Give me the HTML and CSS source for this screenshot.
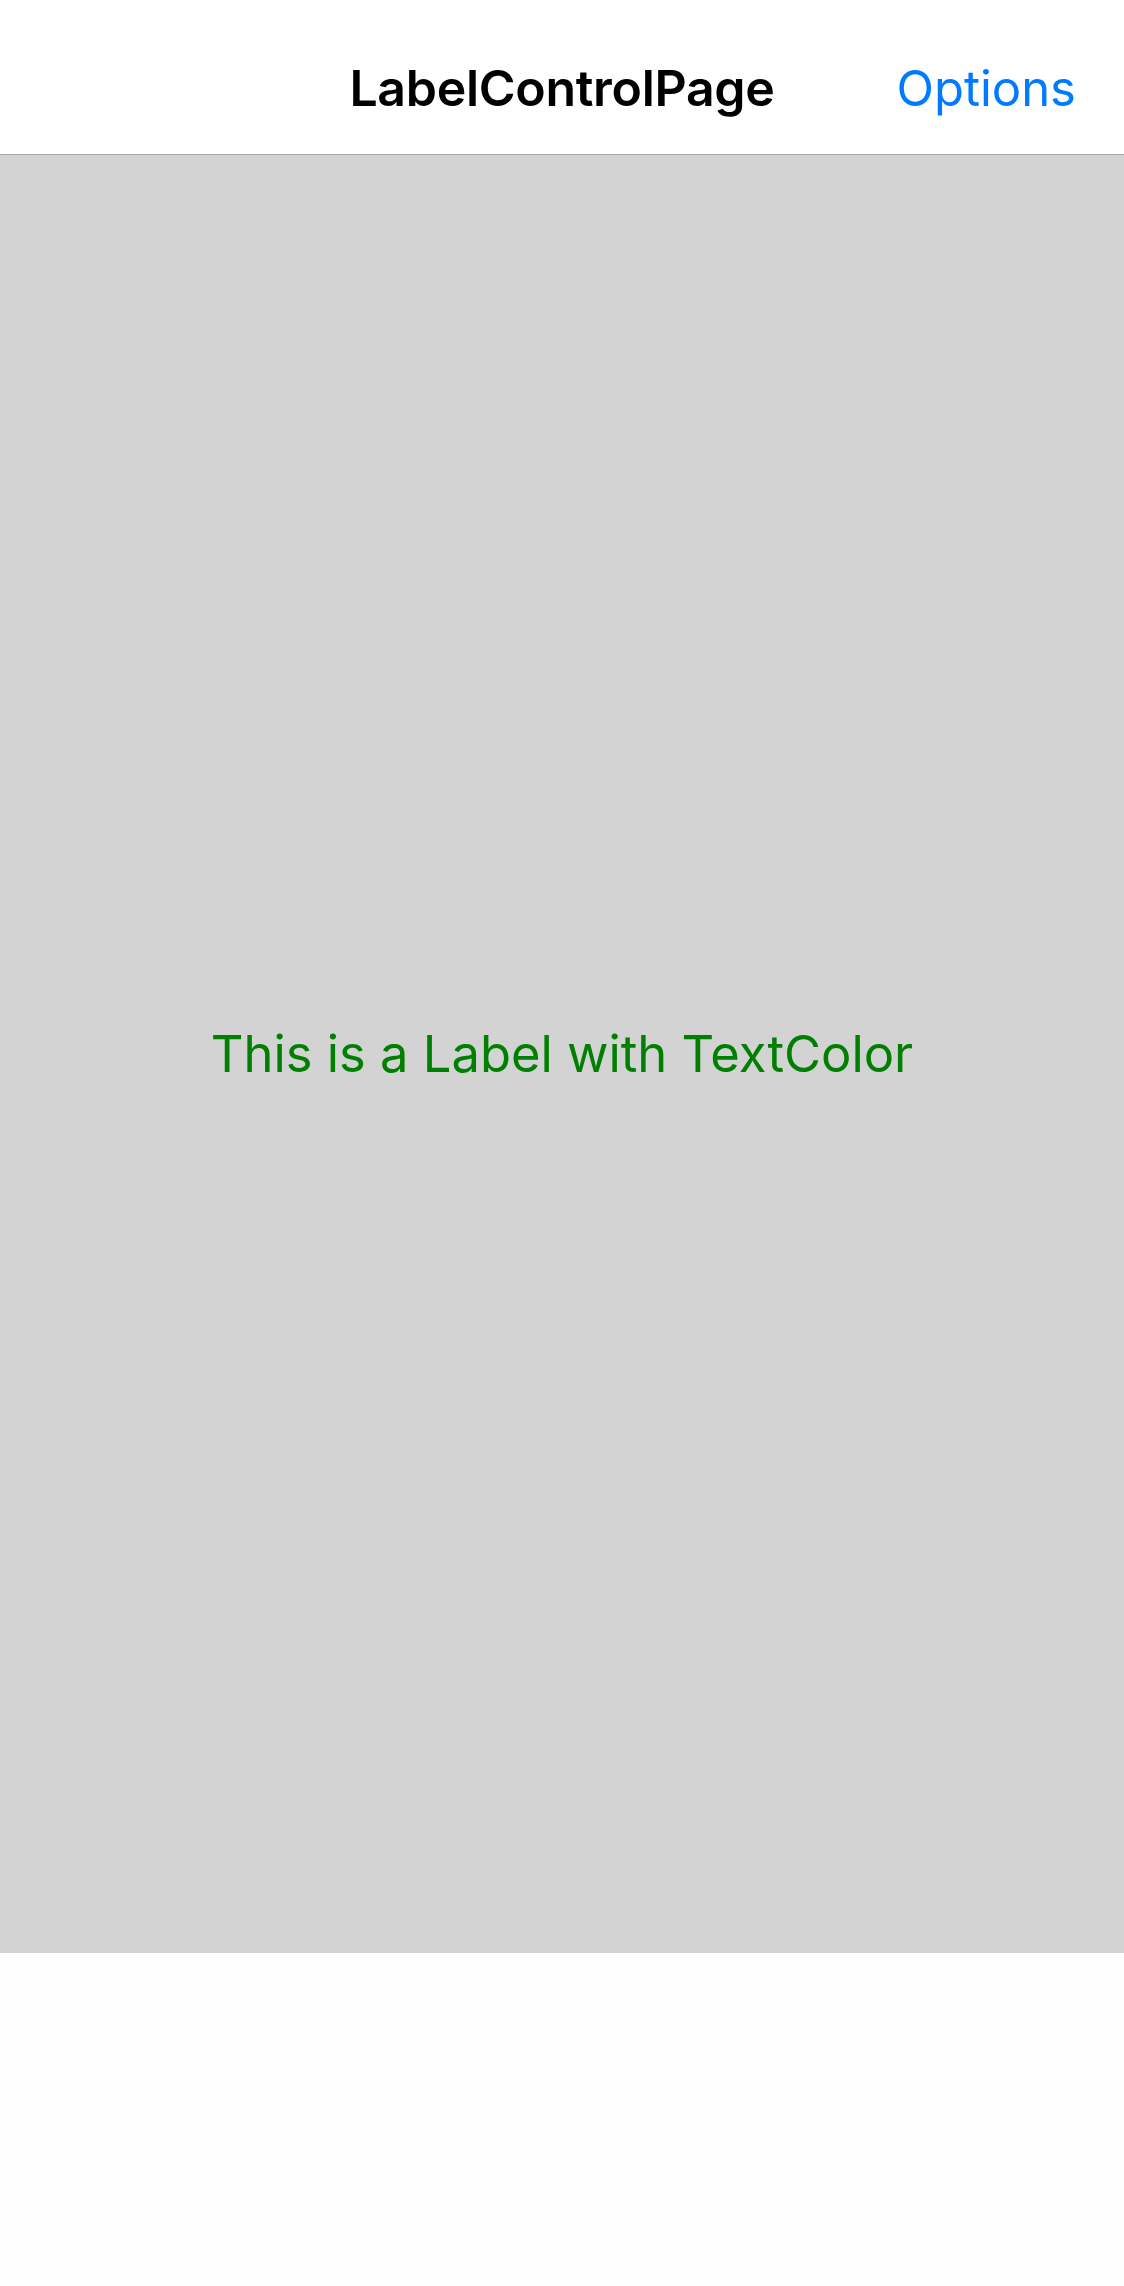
FILE: index.html
```html
<!DOCTYPE html>
<html>
<head>
<meta charset="utf-8">
<link rel="stylesheet" href="styles.css">
</head>
<body>
<div class="app">
  <header class="navbar">
    <div class="nav-side"></div>
    <div class="nav-title">LabelControlPage</div>
    <div class="nav-side nav-right"><span class="nav-action">Options</span></div>
  </header>
  <main class="content">
    <div class="label-green">This is a Label with TextColor</div>
  </main>
  <div class="bottom"></div>
</div>
</body>
</html>
```
FILE: styles.css
```css
html, body {
  margin: 0;
  padding: 0;
  background: #ffffff;
}
.app {
  width: 1124px;
  height: 2286px;
  display: flex;
  flex-direction: column;
  font-family: "Inter", "Roboto", "Liberation Sans", sans-serif;
}
.navbar {
  box-sizing: border-box;
  border-bottom: 1px solid #a6a6a6;
  height: 155px;
  display: grid;
  grid-template-columns: 1fr auto 1fr;
  align-items: center;
  background: #ffffff;
  padding-top: 22px;
}
.nav-title {
  font-size: 50px;
  font-weight: 600;
  color: #000000;
  letter-spacing: -0.3px;
}
.nav-right {
  display: flex;
  justify-content: flex-end;
  padding-right: 48px;
}
.nav-action {
  font-size: 49px;
  color: #007aff;
  font-weight: 400;
}
.content {
  height: 1798px;
  background: #d3d3d3;
  display: flex;
  align-items: center;
  justify-content: center;
}
.label-green {
  color: #008000;
  font-size: 50.7px;
  margin-bottom: 2px;
}
.bottom {
  flex: 1;
  background: #fefefe;
}
```
